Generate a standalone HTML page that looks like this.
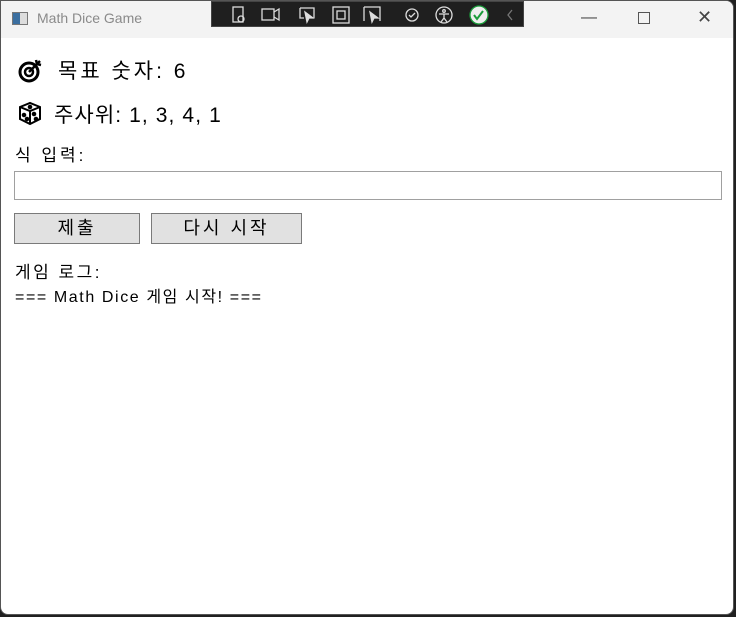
<!DOCTYPE html>
<html><head><meta charset="utf-8"><style>
*{margin:0;padding:0;box-sizing:border-box}
body{width:736px;height:617px;background:#202020;overflow:hidden;position:relative;font-family:"Segoe UI","Liberation Sans","Noto Sans CJK KR",sans-serif}
.win{position:absolute;left:0;top:0;width:734px;height:615px;background:#fff;border-radius:0 8px 8px 8px;overflow:hidden;border:1px solid #555}
.title{height:37px;background:#f3f3f3;position:relative}
.title .t{position:absolute;left:36px;top:9px;font-size:14px;color:#8a8a8a}
.ic{position:absolute;left:11px;top:11px;width:16px;height:13px;border:1px solid #777;background:linear-gradient(90deg,#3b6fa0 0 50%,#ddd 50%)}
.tb{position:absolute;left:210px;top:0;width:313px;height:26px;background:#1f1f1f;border:1px solid #444}
.ctl{position:absolute;top:8px;font-size:16px;color:#444}
.k{position:absolute;color:#000;font-size:21px;white-space:nowrap}
.s{position:absolute;color:#000;font-size:17px;white-space:nowrap}
.inp{position:absolute;left:13px;top:170px;width:708px;height:29px;border:1px solid #a0a0a0}
.btn{position:absolute;top:212px;height:31px;background:#e1e1e1;border:1px solid #7a7a7a;font-size:18px;text-align:center;line-height:28px;letter-spacing:3px}
</style></head><body><div class="win">
<div class="title"><div class="ic"></div><div class="t">Math Dice Game</div>
<div class="tb"><svg width="313" height="26" viewBox="0 0 313 26" fill="none" stroke="#ddd" stroke-width="1.3">
<rect x="21" y="5" width="10" height="15"/><circle cx="29" cy="17" r="3"/>
<rect x="50" y="7" width="12" height="11"/><path d="M62 10l5-3v11l-5-3"/>
<path d="M88 6h14v10M88 6v10h4"/><path d="M93 10l2 10 2-4 4 0z" fill="#ddd"/>
<rect x="121" y="5" width="16" height="16"/><rect x="125" y="9" width="8" height="8"/>
<path d="M152 5h16v14M152 5v14"/><path d="M158 10l2 10 2-4 4 0z" fill="#ddd"/>
<circle cx="200" cy="13" r="6"/><path d="M197 13l2 2 4-4"/>
<circle cx="232" cy="13" r="8"/><circle cx="232" cy="9" r="1.3"/><path d="M227 12h10M232 12v4l-3 4M232 16l3 4"/>
<circle cx="267" cy="13" r="9" fill="#eee" stroke="#1a9d3a"/><path d="M262 13l3 4 6-8" stroke="#1a9d3a" stroke-width="2"/>
<path d="M300 8l-4 5 4 5" stroke="#777"/></svg></div>
<div class="ctl" style="left:580px">—</div>
<div class="ctl" style="left:637px;top:11px;width:12px;height:12px;border:1px solid #555"></div>
<div class="ctl" style="left:696px;top:6px;font-size:18px">✕</div>
</div>
<svg style="position:absolute;left:16px;top:57px" width="28" height="26" viewBox="0 0 28 26" fill="none" stroke="#000">
<circle cx="12" cy="14" r="9" stroke-width="3"/><circle cx="12" cy="14" r="4" stroke-width="2.5"/>
<path d="M12 14l11-11" stroke-width="2.5"/><path d="M19 2l1 4 4 1" stroke-width="2.5"/></svg>
<div class="k" style="left:57px;top:54px;letter-spacing:3px">목표 숫자: 6</div>
<svg style="position:absolute;left:16px;top:99px" width="26" height="26" viewBox="0 0 26 26" fill="none" stroke="#000" stroke-width="2">
<path d="M3 7l10-4 10 4v12l-10 5-10-5z"/><path d="M3 7l10 4 10-4M13 11v13"/>
<circle cx="7" cy="15" r="1.3" fill="#000"/><circle cx="10" cy="19" r="1.3" fill="#000"/><circle cx="17" cy="14" r="1.3" fill="#000"/><circle cx="19" cy="19" r="1.3" fill="#000"/><circle cx="13" cy="7" r="1.3" fill="#000"/></svg>
<div class="k" style="left:53px;top:98px;letter-spacing:1.1px">주사위: 1, 3, 4, 1</div>
<div class="s" style="left:14px;top:140px;letter-spacing:3px">식 입력:</div>
<div class="inp"></div>
<div class="btn" style="left:13px;width:126px">제출</div>
<div class="btn" style="left:150px;width:151px">다시 시작</div>
<div class="s" style="left:14px;top:257px;letter-spacing:2.5px">게임 로그:</div>
<div class="s" style="left:14px;top:282px;font-size:16px;letter-spacing:1.6px">=== Math Dice 게임 시작! ===</div>
</div></body></html>
